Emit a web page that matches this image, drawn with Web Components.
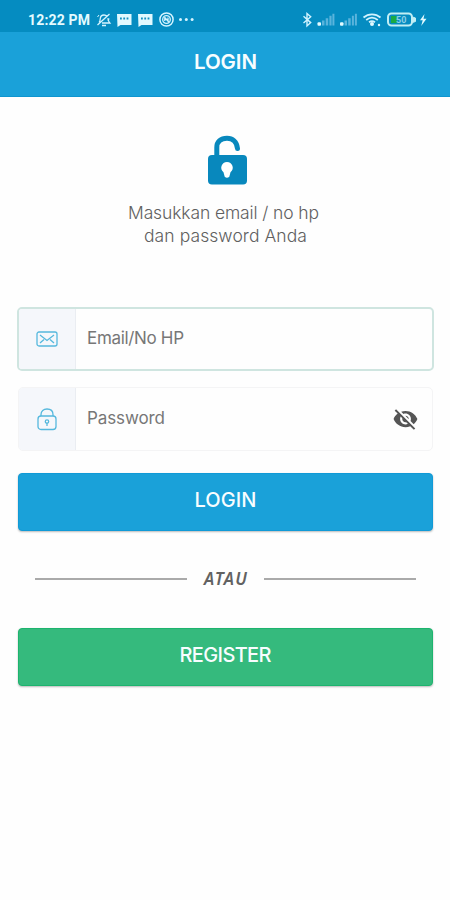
<!DOCTYPE html>
<html lang="id"><head><meta charset="utf-8"><title>Login</title>
<style>
html,body{margin:0;height:100%;background:#fefefe;overflow:hidden}
body{font-family:Inter,"Open Sans",sans-serif;color:#747474}
</style></head><body><login-screen></login-screen>
<script>
const define=(name,html,setup)=>customElements.define(name,class extends HTMLElement{
  constructor(){super();this.attachShadow({mode:'open'}).innerHTML=html}
  connectedCallback(){if(setup)setup(this,this.shadowRoot)}
});
/* Text whose tracking is adjusted so that it spans the given width. */
define('fit-text',`<style>:host{display:block;white-space:nowrap;flex:none}span{display:inline-block}</style><span><slot></slot></span>`,(h,r)=>{
  const s=r.querySelector('span'),w=+h.getAttribute('w'),n=h.textContent.length;
  requestAnimationFrame(()=>{const sp=(w-s.getBoundingClientRect().width)/(n-1);s.style.letterSpacing=sp+'px';s.style.marginRight=-sp+'px'});
});
define('status-bar',`<style>
:host{display:flex;height:32px;box-sizing:border-box;padding:7px 22px 0 28px;align-items:center;background:#058cc1;color:#e4fbff}
fit-text{font:700 14px/20px Roboto,sans-serif}
svg{display:block;flex:none}
.left{margin-left:5px}.right{margin-left:auto}
</style>
<fit-text w="62">12:22 PM</fit-text>
<svg class="left" width="102" height="20" viewBox="95 10 102 20" fill="none" stroke="#d5f4ff" stroke-width="1.3">
<path d="M99 22.5c1-1 1.2-2.3 1.3-4 .2-2 1.5-3.5 3.7-3.5 1.3 0 2.3.5 3 1.3M108 18c.1 2 .5 3.6 1.8 5H102M97.5 25 109.5 14M102 25.5h4"/>
<path d="M99 15l-1.5 2M107.500 20l2-1" stroke-width="1"/>
<g fill="#e1f9ff" stroke="none"><path d="M117 14h14.500v11H120.500l-3 2zM138 14h14.500v11h-11l-3 2z"/></g>
<path d="M120 18.500h1.800M123.300 18.500h1.800M126.600 18.500h1.800M141 18.500h1.800M144.300 18.500h1.800M147.600 18.500h1.800" stroke="#168fc0" stroke-width="2"/>
<circle cx="166.500" cy="19.500" r="6.600" stroke-width="1.500"/><circle cx="166.500" cy="19.500" r="3.800"/><path d="M164.500 17.200l4.300 4.800M164.800 17v4M168 17.500v4"/>
<g fill="#d5f4ff" stroke="none"><circle cx="180.500" cy="19.500" r="1.500"/><circle cx="186.300" cy="19.500" r="1.500"/><circle cx="192.100" cy="19.500" r="1.500"/></g>
</svg>
<svg class="right" width="128" height="20" viewBox="300 10 128 20" fill="none" stroke="#d1f3ff">
<path d="M303.500 16.300l7.200 6.300-3.700 3.300V13.500l3.700 3.200-7.200 6.300" stroke-width="1.400"/>
<g fill="#5ab4dc" stroke="none"><path d="M322 20.500h2.500v5H322zM325.700 18.200h2.500v7.300h-2.500zM329.400 15.800h2.200v9.700h-2.200zM332.400 13.700h2v11.800h-2zM344.500 20.500h2.500v5h-2.500zM348.200 18.200h2.500v7.300h-2.500zM351.900 15.800h2v9.700h-2zM354.900 13.700h2v11.800h-2z"/></g>
<g fill="#e2faff" stroke="none"><rect x="317.500" y="22.200" width="3.500" height="3.500" rx="1"/><rect x="340" y="22.200" width="3.500" height="3.500" rx="1"/><circle cx="372" cy="24" r="2"/><circle cx="379" cy="25" r="1.200"/></g>
<path d="M363.500 17.500c5-4.300 12-4.300 17 0M366.200 20c3.500-3 8-3 11.600 0M369 22.300c2-1.500 4-1.500 6 0" stroke-width="1.700"/>
<rect x="388" y="13.500" width="24" height="12" rx="3.500" stroke="#c1eef4" stroke-width="2"/><path d="M391 16h6v7h-6z" fill="#19aa43" stroke="none"/><path d="M412.500 17l3 1v3.500l-3 1z" fill="#c1eef4" stroke="#c1eef4"/><text x="396" y="23" font-family="Roboto" font-weight="700" font-size="9" fill="#8bd0e6" stroke="none">50</text>
<path d="M424.500 14l-4.500 6.300h2.700l-1.500 5.700 5.300-7.200h-3z" fill="#e2faff" stroke="none"/>
</svg>`);
define('app-bar',`<style>:host{display:flex;height:64.500px;box-sizing:border-box;background:#1aa1d9;border-bottom:1px solid #0f95cf;justify-content:center;padding:17px 0 0 1px;color:#f7fdff;font:600 20.500px/26px Inter,sans-serif}</style><fit-text w="63">LOGIN</fit-text>`);
define('login-intro',`<style>:host{display:flex;flex-direction:column;align-items:center;height:210.500px;box-sizing:border-box;padding:38px 0 0 4px;font:300 17.500px/23px Inter,sans-serif;color:#606060}svg{display:block;margin-bottom:16px}fit-text{margin-right:7px}fit-text+fit-text{margin-right:3px}</style>
<svg width="42" height="50" viewBox="206 135 42 50"><path d="M216.800 156v-8.500c0-6 4-9.200 10.200-9.200 5.500 0 9.800 3.200 10.500 10.200" fill="none" stroke="#0888bd" stroke-width="5" stroke-linecap="round"/><rect x="208" y="155" width="39" height="29.500" rx="4" fill="#0888bd"/><path d="M227 162a5.700 5.700 0 0 0-3.500 10.200l1.200 4.500q2.300 2 4.600 0l1.200-4.500A5.700 5.700 0 0 0 227 162z" fill="#fff"/></svg>
<fit-text w="191">Masukkan email / no hp</fit-text><fit-text w="163">dan password Anda</fit-text>`);
define('input-field',`<style>:host{display:flex;height:64px;box-sizing:border-box;border:1px solid #f4f4f5;border-radius:5px;background:#fefefe;overflow:hidden;font:400 17px/24px Inter,sans-serif;color:#777}
:host([active]){border:2px solid #cfe5e0;margin:0 -1px}
.icon{width:57px;display:grid;place-items:center;background:#f5f7fb;border-right:1px solid #eaedf2;box-sizing:border-box;flex:none}
.value{padding:18px 0 0 11px;flex:1}:host([active]) .value{padding-top:17px}
::slotted(svg){display:block}</style>
<div class="icon"><slot name="icon"></slot></div><div class="value"><slot></slot></div><slot name="end"></slot>`);
define('action-button',`<style>:host{display:flex;justify-content:center;height:58px;box-sizing:border-box;padding-top:13px;border-radius:4px;background:#1aa1d9;border:1px solid #109ad7;box-shadow:0 1px 2px #0004;color:#f8fdff;font:500 20px/26px Inter,sans-serif}
:host([green]){background:#35ba7d;border-color:#1db46e}</style><slot></slot>`);
define('or-divider',`<style>:host{display:flex;align-items:center;justify-content:center;gap:17px;height:24px;padding:0 17px;font:italic 600 17px/24px "Noto Sans","Open Sans",sans-serif;color:#626262}i{height:2px;flex:1;background:#aaa}fit-text{margin-top:-2px}</style><i></i><slot></slot><i></i>`);
define('login-screen',`<style>:host{display:block;height:900px;background:#fefefe}.form{padding:0 17px 0 18px}.form input-field+input-field{margin-top:16px}.login{margin-top:22px}or-divider{margin:36px 0 37px}.eye{align-self:center;margin-right:13px}svg{display:block}</style>
<status-bar></status-bar><app-bar></app-bar><login-intro></login-intro>
<div class="form">
<input-field active><svg slot="icon" width="22" height="18" viewBox="0 0 22 18" fill="none" stroke="#55b8dd" stroke-width="1.300"><rect x="1" y="2" width="20" height="14" rx="2"/><path d="M4 5l7 5.500L18 5M4 13l4-3.500M18 13l-4-3.500"/></svg><fit-text w="97">Email/No HP</fit-text></input-field>
<input-field><svg slot="icon" width="20" height="24" viewBox="0 0 20 24" fill="none" stroke="#55b8dd" stroke-width="1.300"><rect x="1" y="9" width="18" height="13.500" rx="3"/><path d="M4 9V7.500C4 4 6.500 2 10 2s6 2 6 5.500V9"/><circle cx="10" cy="14.500" r="1.700"/><path d="M10 16v3"/></svg><fit-text w="78">Password</fit-text>
<svg slot="end" class="eye" width="27" height="26" viewBox="0 0 24 24" fill="#555"><path d="M12 7c2.760 0 5 2.240 5 5 0 .650-.130 1.260-.360 1.830l2.920 2.920c1.510-1.260 2.700-2.890 3.430-4.750-1.730-4.390-6-7.500-11-7.500-1.400 0-2.740.250-3.980.700l2.160 2.160C10.740 7.130 11.350 7 12 7zM2 4.270l2.280 2.280.460.460C3.080 8.300 1.780 10.020 1 12c1.730 4.390 6 7.500 11 7.500 1.550 0 3.030-.300 4.380-.840l.420.420L19.730 22 21 20.730 3.270 3 2 4.270zM7.530 9.800l1.550 1.550c-.050.210-.080.430-.080.650 0 1.660 1.340 3 3 3 .220 0 .440-.030.650-.080l1.550 1.550c-.670.330-1.410.530-2.200.530-2.760 0-5-2.240-5-5 0-.790.200-1.530.530-2.200zm4.310-.780 3.150 3.150.020-.160c0-1.660-1.340-3-3-3l-.170.010z"/></svg></input-field>
<action-button class="login"><fit-text w="62">LOGIN</fit-text></action-button>
<or-divider><fit-text w="43">ATAU</fit-text></or-divider>
<action-button green><fit-text w="92">REGISTER</fit-text></action-button>
</div>`);
</script></body></html>
